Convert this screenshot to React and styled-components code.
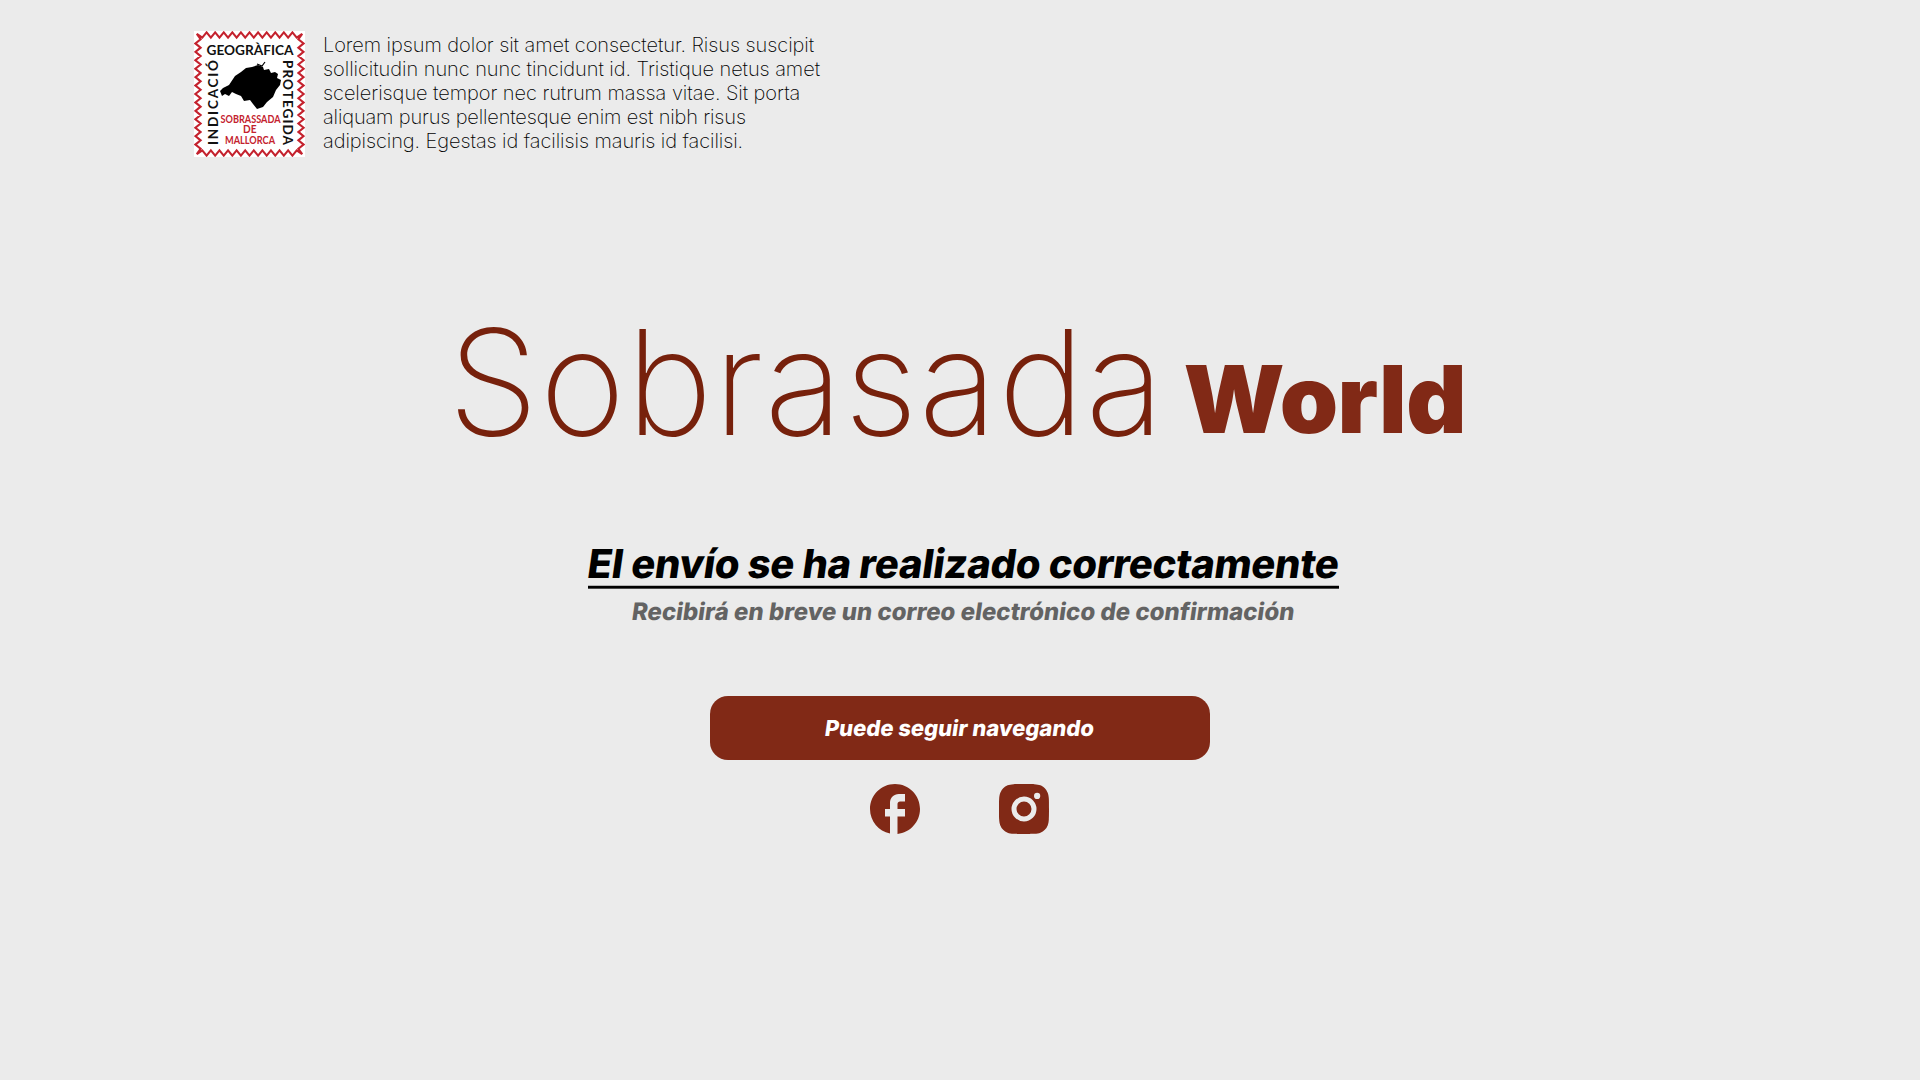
import React from "react";
import styled, { createGlobalStyle } from "styled-components";

const GlobalStyle = createGlobalStyle`
  * { box-sizing: border-box; margin: 0; padding: 0; }
  body { background: #ebebeb; font-family: Inter, "Liberation Sans", sans-serif; }
`;

const Page = styled.div`
  min-height: 1080px;
  background: #ebebeb;
  overflow: hidden;
`;

const Header = styled.header`
  display: flex;
  align-items: flex-start;
  gap: 18px;
  height: 157px;
  padding: 31px 0 0 194px;
`;

const Stamp = styled.svg`
  display: block;
  flex: none;
  width: 111px;
  height: 126px;
`;

const Intro = styled.p`
  width: 520px;
  padding-top: 2px;
  font-size: 20px;
  font-weight: 200;
  line-height: 24px;
  color: #000;
  white-space: nowrap;
`;

const IntroLine = styled.span`
  display: block;
  letter-spacing: ${(p) => p.$track}px;
`;

const Main = styled.main`
  display: flex;
  flex-direction: column;
  align-items: center;
`;

const Title = styled.h1`
  display: flex;
  align-items: flex-start;
  gap: 18.5px;
  height: 180px;
  margin-top: 135px;
  padding-right: 6px;
  line-height: 180px;
`;

const Brand = styled.span`
  font-size: 146px;
  font-weight: 200;
  letter-spacing: 1px;
  color: #77210c;
`;

const World = styled.span`
  margin-top: 17px;
  font-size: 93.5px;
  font-weight: 900;
  letter-spacing: -0.5px;
  color: #812916;
`;

const Slanted = styled.span`
  display: inline-block;
  transform: skewX(-8deg);
`;

const Message = styled.h2`
  height: 49px;
  margin: 67px 0 0 7px;
  padding-top: 1px;
  border-bottom: 2px solid #000;
  box-shadow: 0 1px 0 #4a4a4a, inset 0 -1px 0 #b4b4b4;
  font-size: 40px;
  font-weight: 800;
  line-height: 48px;
  letter-spacing: -0.28px;
  color: #000;
`;

const Note = styled.p`
  margin-top: 9px;
  padding-left: 7px;
  font-size: 24px;
  font-weight: 800;
  line-height: 30px;
  color: #636363;
`;

const ContinueButton = styled.button`
  width: 500px;
  height: 64px;
  margin-top: 69px;
  border: 0;
  border-radius: 18px;
  background: #812916;
  color: #fff;
  font-family: inherit;
  font-size: 22px;
  font-weight: 800;
`;

const Social = styled.nav`
  display: flex;
  gap: 79px;
  margin: 24px 1px 0 0;
`;

const SocialIcon = styled.svg`
  display: block;
  width: 50px;
  height: 50px;
  fill: #812916;
`;

const zigzag = () => {
  const nx = 24, ny = 28;
  const l = 4, r = 107, t = 4, b = 122, a = 2.6, c = 1.2;
  const p = [];
  const side = (n, corner, at) => {
    p.push(corner);
    for (let i = 1; i < n; i++) p.push(at(i / n, i % 2 ? -a : a));
  };
  side(nx, [l - c, t - c], (f, o) => [l + (r - l) * f, t - o]);
  side(ny, [r + c, t - c], (f, o) => [r + o, t + (b - t) * f]);
  side(nx, [r + c, b + c], (f, o) => [r - (r - l) * f, b + o]);
  side(ny, [l - c, b + c], (f, o) => [l - o, b - (b - t) * f]);
  return p.map((q) => q.join(",")).join(" ");
};

const StampText = styled.text`
  font-family: Lato, "Open Sans", sans-serif;
  font-size: ${(p) => p.$size}px;
  font-weight: ${(p) => p.$weight || 700};
  fill: ${(p) => p.$color || "#111"};
`;

function QualityStamp() {
  return (
    <Stamp viewBox="0 0 111 126">
      <rect width="111" height="126" fill="#fff" />
      <polygon points={zigzag()} fill="none" stroke="#c4222e" strokeWidth="2.1" />
      <StampText $size={12.5} x="12.5" y="23.5" textLength="87" lengthAdjust="spacingAndGlyphs">GEOGRÀFICA</StampText>
      <StampText $size={13.5} transform="translate(23.5 114) rotate(-90)" textLength="85" lengthAdjust="spacing">INDICACIÓ</StampText>
      <StampText $size={13.5} transform="translate(89 29) rotate(90)" textLength="85" lengthAdjust="spacing">PROTEGIDA</StampText>
      <path
        d="M26 60 L29 57 L35 54 L41 45 L47 41 L52 37 L58 36 L64 34 L69 36 L70 39 L75 38 L77 42 L81 41 L84 43 L83 47 L87 49 L86 54 L82 59 L79 66 L73 71 L69 76 L63 78 L59 73 L56 69 L50 70 L47 65 L42 63 L38 61 L35 65 L31 63 L28 65 Z"
        fill="#000"
      />
      <path d="M63 33 L68 35 L71 31" fill="none" stroke="#000" strokeWidth="1.2" />
      <StampText $size={11} $color="#c4222e" x="26.5" y="91.5" textLength="60" lengthAdjust="spacingAndGlyphs">SOBRASSADA</StampText>
      <StampText $size={11} $color="#c4222e" x="49" y="102" textLength="13.5" lengthAdjust="spacingAndGlyphs">DE</StampText>
      <StampText $size={11} $color="#c4222e" x="31" y="113" textLength="50" lengthAdjust="spacingAndGlyphs">MALLORCA</StampText>
    </Stamp>
  );
}

export default function App() {
  return (
    <Page>
      <GlobalStyle />
      <Header>
        <QualityStamp />
        <Intro>
          <IntroLine $track={-0.07}>Lorem ipsum dolor sit amet consectetur. Risus suscipit</IntroLine>
          <IntroLine $track={-0.06}>sollicitudin nunc nunc tincidunt id. Tristique netus amet</IntroLine>
          <IntroLine $track={-0.06}>scelerisque tempor nec rutrum massa vitae. Sit porta</IntroLine>
          <IntroLine $track={-0.16}>aliquam purus pellentesque enim est nibh risus</IntroLine>
          <IntroLine $track={-0.09}>adipiscing. Egestas id facilisis mauris id facilisi.</IntroLine>
        </Intro>
      </Header>
      <Main>
        <Title>
          <Brand>Sobrasada</Brand>
          <World>World</World>
        </Title>
        <Message><Slanted>El envío se ha realizado correctamente</Slanted></Message>
        <Note><Slanted>Recibirá en breve un correo electrónico de confirmación</Slanted></Note>
        <ContinueButton><Slanted>Puede seguir navegando</Slanted></ContinueButton>
        <Social>
          <SocialIcon viewBox="2 2 20 20">
            <path d="M22 12c0-5.52-4.48-10-10-10S2 6.48 2 12c0 4.84 3.44 8.87 8 9.8V15H8v-3h2V9.5C10 7.57 11.57 6 13.5 6H16v3h-2c-.55 0-1 .45-1 1v2h3v3h-3v6.95c5.05-.5 9-4.76 9-9.95z" />
          </SocialIcon>
          <SocialIcon viewBox="2 2 20 20">
            <path
              fillRule="evenodd"
              d="M12 2c2.717 0 3.056.01 4.122.06 1.065.05 1.79.217 2.428.465.66.254 1.216.598 1.772 1.153a4.908 4.908 0 0 1 1.153 1.772c.247.637.415 1.363.465 2.428.047 1.066.06 1.405.06 4.122 0 2.717-.01 3.056-.06 4.122-.05 1.065-.218 1.79-.465 2.428a4.883 4.883 0 0 1-1.153 1.772 4.915 4.915 0 0 1-1.772 1.153c-.637.247-1.363.415-2.428.465-1.066.047-1.405.06-4.122.06-2.717 0-3.056-.01-4.122-.06-1.065-.05-1.79-.218-2.428-.465a4.89 4.89 0 0 1-1.772-1.153 4.904 4.904 0 0 1-1.153-1.772c-.248-.637-.415-1.363-.465-2.428C2.013 15.056 2 14.717 2 12c0-2.717.01-3.056.06-4.122.05-1.066.217-1.79.465-2.428a4.88 4.88 0 0 1 1.153-1.772A4.897 4.897 0 0 1 5.45 2.525c.638-.248 1.362-.415 2.428-.465C8.944 2.013 9.283 2 12 2zm0 5a5 5 0 1 0 0 10 5 5 0 0 0 0-10zm6.5-.25a1.25 1.25 0 1 0-2.5 0 1.25 1.25 0 0 0 2.5 0zM12 9a3 3 0 1 1 0 6 3 3 0 0 1 0-6z"
            />
          </SocialIcon>
        </Social>
      </Main>
    </Page>
  );
}
